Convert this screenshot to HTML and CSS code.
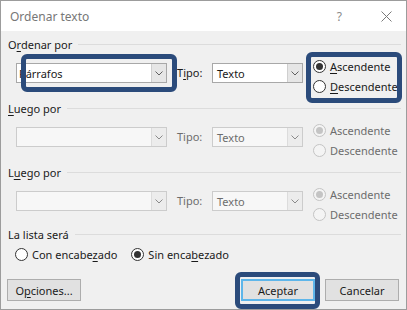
FILE: index.html
```html
<!DOCTYPE html>
<html lang="es">
<head>
    <meta charset="UTF-8">
    <meta name="viewport" content="width=device-width, initial-scale=1.0">
    <title>Ordenar texto</title>
    <link rel="stylesheet" href="styles.css">
</head>
<body>
    <div class="dialog">
        <div class="titlebar">
            <span class="title">Ordenar texto</span>
            <span class="help">?</span>
            <svg class="close" width="11" height="11" viewBox="0 0 11 11">
                <path d="M0.5 0.5 L10.5 10.5 M10.5 0.5 L0.5 10.5" stroke="#7a7a7a" stroke-width="1" fill="none"/>
            </svg>
        </div>

        <div class="content">
            <section class="group">
                <div class="group-head"><span>O<u>r</u>denar por</span></div>
                <div class="sort-row">
                    <div class="combo combo-field">
                        <span class="combo-value first-value">Párrafos</span>
                        <span class="combo-btn"><svg width="8" height="5" viewBox="0 0 8 5"><path d="M0.5 0.5 L4 4 L7.5 0.5" stroke="#606060" fill="none"/></svg></span>
                    </div>
                    <span class="tipo">T<u>i</u>po:</span>
                    <div class="combo combo-type">
                        <span class="combo-value">Texto</span>
                        <span class="combo-btn"><svg width="8" height="5" viewBox="0 0 8 5"><path d="M0.5 0.5 L4 4 L7.5 0.5" stroke="#606060" fill="none"/></svg></span>
                    </div>
                    <div class="order">
                        <label class="radio"><span class="circle checked"></span><span><u>A</u>scendente</span></label>
                        <label class="radio"><span class="circle"></span><span><u>D</u>escendente</span></label>
                    </div>
                </div>
            </section>

            <section class="group disabled">
                <div class="group-head"><span><u>L</u>uego por</span></div>
                <div class="sort-row">
                    <div class="combo combo-field">
                        <span class="combo-value"></span>
                        <span class="combo-btn"><svg width="8" height="5" viewBox="0 0 8 5"><path d="M0.5 0.5 L4 4 L7.5 0.5" stroke="#8a8a8a" fill="none"/></svg></span>
                    </div>
                    <span class="tipo">Tipo:</span>
                    <div class="combo combo-type">
                        <span class="combo-value">Texto</span>
                        <span class="combo-btn"><svg width="8" height="5" viewBox="0 0 8 5"><path d="M0.5 0.5 L4 4 L7.5 0.5" stroke="#8a8a8a" fill="none"/></svg></span>
                    </div>
                    <div class="order">
                        <label class="radio"><span class="circle checked"></span><span>Ascendente</span></label>
                        <label class="radio"><span class="circle"></span><span>Descendente</span></label>
                    </div>
                </div>
            </section>

            <section class="group disabled">
                <div class="group-head"><span>L<u>u</u>ego por</span></div>
                <div class="sort-row">
                    <div class="combo combo-field">
                        <span class="combo-value"></span>
                        <span class="combo-btn"><svg width="8" height="5" viewBox="0 0 8 5"><path d="M0.5 0.5 L4 4 L7.5 0.5" stroke="#8a8a8a" fill="none"/></svg></span>
                    </div>
                    <span class="tipo">Tipo:</span>
                    <div class="combo combo-type">
                        <span class="combo-value">Texto</span>
                        <span class="combo-btn"><svg width="8" height="5" viewBox="0 0 8 5"><path d="M0.5 0.5 L4 4 L7.5 0.5" stroke="#8a8a8a" fill="none"/></svg></span>
                    </div>
                    <div class="order">
                        <label class="radio"><span class="circle checked"></span><span>Ascendente</span></label>
                        <label class="radio"><span class="circle"></span><span>Descendente</span></label>
                    </div>
                </div>
            </section>

            <section class="list-group">
                <div class="group-head"><span>La lista será</span></div>
                <div class="list-row">
                    <label class="radio"><span class="circle"></span><span>Con encabe<u>z</u>ado</span></label>
                    <label class="radio"><span class="circle checked"></span><span>Sin enca<u>b</u>ezado</span></label>
                </div>
            </section>

            <div class="buttons">
                <button class="btn btn-options">O<u>p</u>ciones...</button>
                <div class="btn-group">
                    <button class="btn btn-default">Aceptar</button>
                    <button class="btn">Cancelar</button>
                </div>
            </div>
        </div>

        <div class="mark mark-field"></div>
        <div class="mark mark-order"></div>
        <div class="mark mark-ok"></div>
    </div>
</body>
</html>
```

FILE: styles.css
```css
body {
    margin: 0;
    font-family: "Noto Sans", "DejaVu Sans", sans-serif;
    font-size: 11px;
    color: #1a1a1a;
}
.dialog {
    position: relative;
    width: 407px;
    height: 310px;
    box-sizing: border-box;
    border: 1px solid #9c9c9c;
    background: #f0f0f0;
    overflow: hidden;
}
.titlebar {
    height: 30px;
    background: white;
    display: flex;
    align-items: center;
    padding-left: 9px;
}
.title {
    font-size: 12px;
    color: #777;
    flex: 1;
}
.help {
    font-size: 12px;
    color: #8a8a8a;
    margin-right: 39px;
}
.close {
    margin-right: 14px;
}
.content {
    padding: 5px 5px 0 7px;
}
u {
    text-decoration-thickness: 1px;
    text-underline-offset: 2px;
}
.group {
    height: 64px;
}
.group-head {
    height: 16px;
    display: flex;
    align-items: center;
    gap: 6px;
}
.group-head::after {
    content: "";
    flex: 1;
    border-top: 1px solid #dcdcdc;
}
.sort-row {
    height: 48px;
    display: flex;
    align-items: flex-start;
}
.combo {
    margin-top: 11px;
    height: 20px;
    box-sizing: border-box;
    border: 1px solid #a8a8a8;
    background: white;
    display: flex;
    align-items: center;
}
.combo-field {
    margin-left: 8px;
    width: 151px;
}
.combo-type {
    width: 91px;
}
.combo-value {
    flex: 1;
    padding-left: 4px;
}
.first-value {
    padding-left: 2px;
}
.combo-btn {
    width: 15px;
    height: 100%;
    box-sizing: border-box;
    border-left: 1px solid #cfcfcf;
    background: #e6e6e6;
    display: flex;
    align-items: center;
    justify-content: center;
}
.tipo {
    margin: 11px 0 0 10px;
    width: 35px;
    line-height: 20px;
}
.order {
    margin-left: 10px;
    padding-top: 4px;
    display: flex;
    flex-direction: column;
}
.radio {
    height: 20px;
    display: flex;
    align-items: center;
    gap: 4px;
}
.circle {
    width: 13px;
    height: 13px;
    box-sizing: border-box;
    border: 1px solid #333;
    border-radius: 50%;
    background: white;
    display: flex;
    align-items: center;
    justify-content: center;
}
.circle.checked::after {
    content: "";
    width: 7px;
    height: 7px;
    border-radius: 50%;
    background: #333;
}
.disabled .combo {
    border-color: #cccccc;
    background: #f7f7f7;
}
.disabled .combo-btn {
    border-left-color: #dcdcdc;
    background: #ececec;
}
.disabled .tipo,
.disabled .combo-value,
.disabled .radio {
    color: #6d6d6d;
}
.disabled .circle {
    border-color: #c4c4c4;
    background: #f4f4f4;
}
.disabled .circle.checked::after {
    background: #c4c4c4;
}
.list-group {
    margin-top: -2px;
}
.list-row {
    margin-top: 2px;
    padding-left: 7px;
    display: flex;
    gap: 14px;
}
.buttons {
    margin-top: 15px;
    display: flex;
    justify-content: space-between;
    padding-right: 2px;
}
.btn-group {
    display: flex;
    gap: 10px;
}
.btn {
    width: 74px;
    height: 22px;
    box-sizing: border-box;
    border: 1px solid #adadad;
    background: #e1e1e1;
    font-family: inherit;
    font-size: 11px;
    color: #1a1a1a;
    padding: 0;
}
.btn-options {
    margin-left: -1px;
}
.btn-default {
    border: 2px solid #5eb6ea;
}
.mark {
    position: absolute;
    box-sizing: border-box;
    border: 5px solid #2b4b7b;
    border-radius: 6px;
}
.mark-field {
    left: 20px;
    top: 53px;
    width: 156px;
    height: 38px;
}
.mark-order {
    left: 305px;
    top: 51px;
    width: 96px;
    height: 51px;
}
.mark-ok {
    left: 234px;
    top: 271px;
    width: 85px;
    height: 37px;
}
```
